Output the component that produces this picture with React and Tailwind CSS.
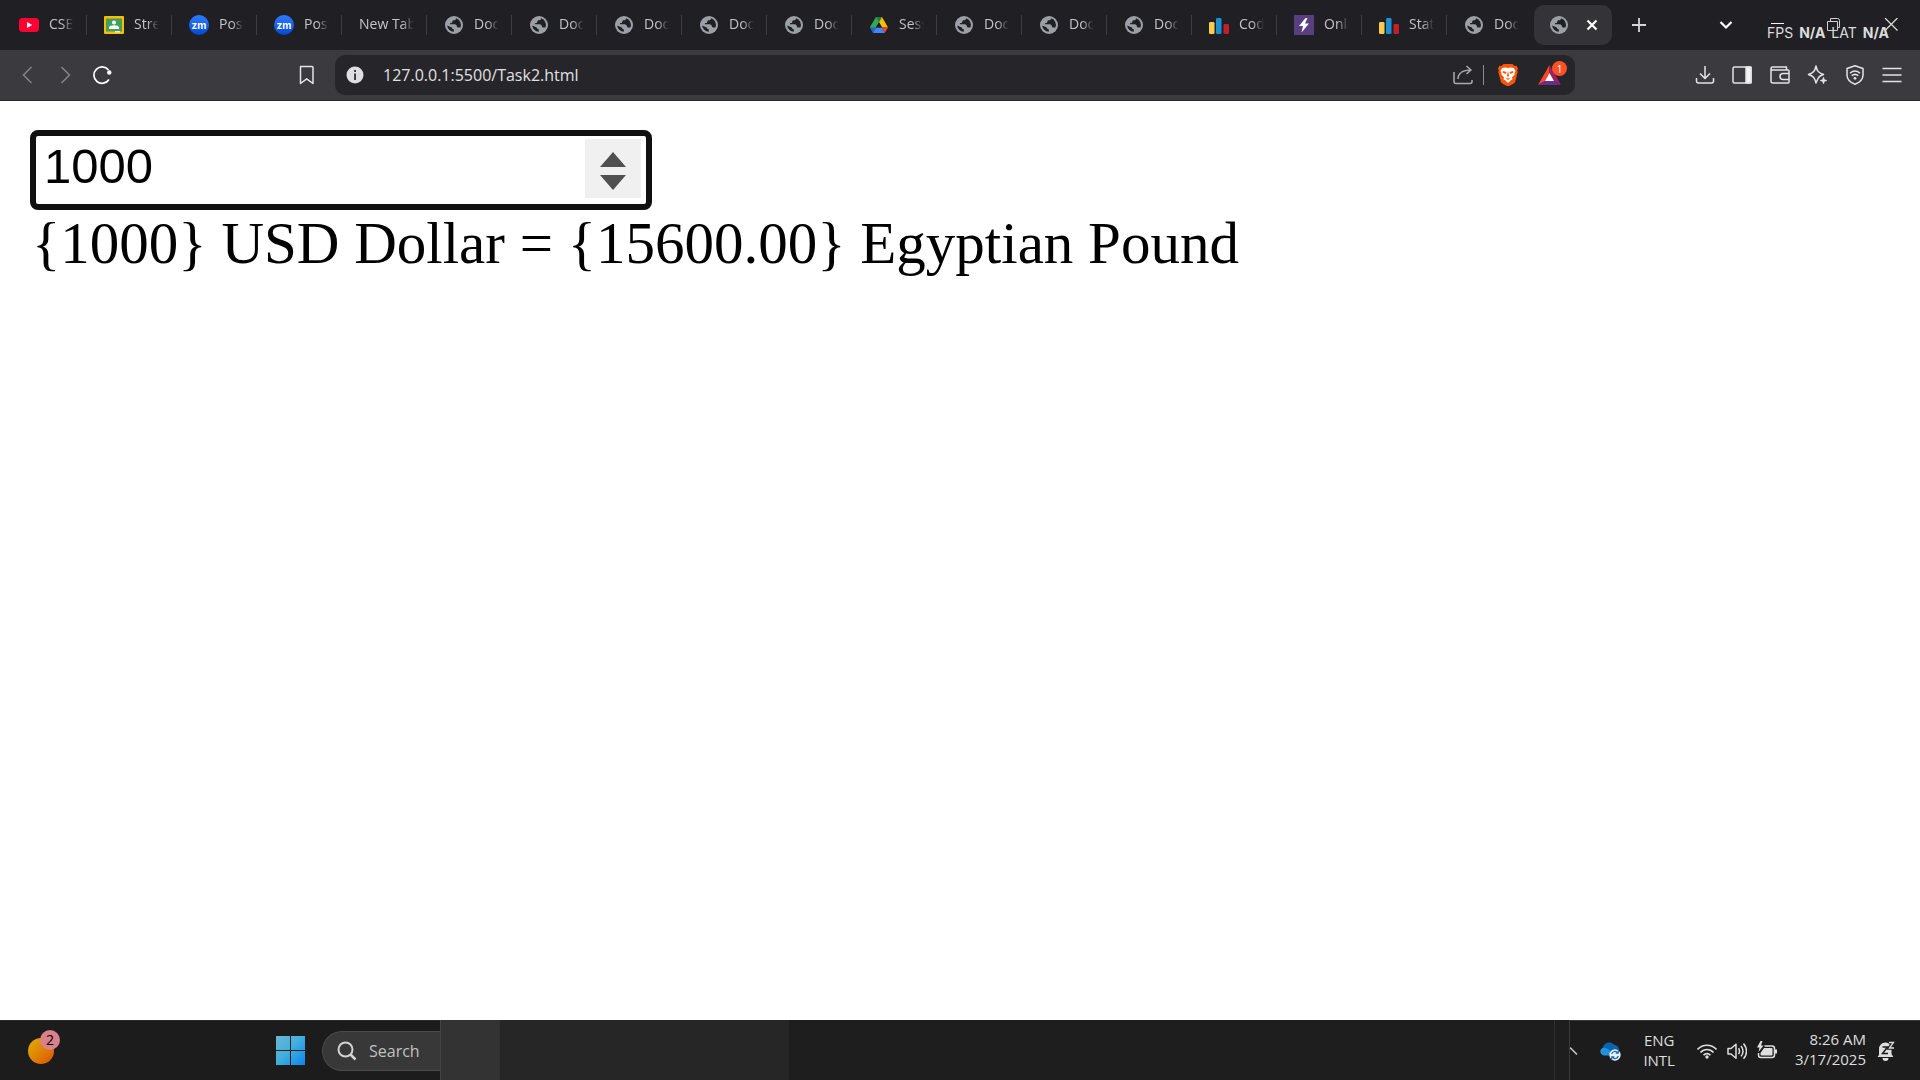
import { useState } from "react";

const doc = { icon: "globe", text: "Doc" };
const TABS = [
  { icon: "youtube", text: "CSE" },
  { icon: "classroom", text: "Stre" },
  { icon: "zoom", text: "Post" },
  { icon: "zoom", text: "Post" },
  { icon: null, text: "New Tab" },
  doc, doc, doc, doc, doc,
  { icon: "drive", text: "Sess" },
  doc, doc, doc,
  { icon: "bars", text: "Cod" },
  { icon: "bolt", text: "Onli" },
  { icon: "bars", text: "Stat" },
  doc,
];

function Globe() {
  return (
    <svg viewBox="0 0 20 20" className="size-5">
      <circle cx="10" cy="10" r="9" fill="#9aa0a6" />
      <path d="M12 3.200C12 4.600 11.200 5.200 10 5.200c-1.300 0-1.700.7-1.700 1.500 0 .9-.5 1.300-1.400 1.300-.7 0-1 .5-1 1.300h4.600c1.600 0 2.400 1 2.400 2.300 0 .5.300.8 1 .8h2.500A7 7 0 0 0 12 3.200zM3.200 10.400l4.600 2.100c.3 1.200.8 1.700 2 1.800v2.500A6.900 6.900 0 0 1 3.200 10.400z" fill="#202024" />
    </svg>
  );
}

function TabIcon({ name }) {
  if (name === "globe") return <Globe />;
  if (name === "youtube")
    return (
      <svg viewBox="0 0 20 20" className="size-5">
        <rect y="3" width="20" height="14" rx="3.500" fill="#ff0033" />
        <path d="M8 7l5.200 3L8 13z" fill="#fff" />
      </svg>
    );
  if (name === "classroom")
    return (
      <svg viewBox="0 0 20 20" className="size-5">
        <rect y="1" width="20" height="18" rx="1" fill="#fbbc04" />
        <rect x="2" y="3.500" width="16" height="13" fill="#43a05c" />
        <circle cx="10" cy="7.500" r="2" fill="#fff" />
        <path d="M5 14v-1.500c0-1.500 2.500-2.300 5-2.300s5 .8 5 2.300V14z" fill="#fff" />
        <path d="M11 16h5v1.500h-5z" fill="#e8eaed" />
      </svg>
    );
  if (name === "zoom")
    return (
      <span className="flex size-5 shrink-0 items-center justify-center rounded-full bg-linear-to-b from-[#2f7bff] to-[#0048d8] font-['Inter'] text-[10px] leading-none font-bold text-white">
        zm
      </span>
    );
  if (name === "drive")
    return (
      <svg viewBox="0 0 20 20" className="size-5">
        <path d="M7 2h6l-3 5.200L4.200 17.200 1 12z" fill="#34a853" />
        <path d="M7 2h6l-3 5.200z" fill="#188038" />
        <path d="M13 2l6 10.500h-6L10 7.200z" fill="#fbbc04" />
        <path d="M7 12.500h6L15.800 18H4z" fill="#4285f4" />
        <path d="M1 12.500h6L4 18z" fill="#1967d2" />
        <path d="M13 12.500h6L15.800 18z" fill="#ea4335" />
        <path d="M10 7.200l3 5.300H7z" fill="#202024" />
      </svg>
    );
  if (name === "bars")
    return (
      <svg viewBox="0 0 20 20" className="size-5">
        <rect x="0" y="7" width="5.500" height="12" rx="1.200" fill="#f9cc4c" />
        <rect x="7" y="3" width="5.500" height="16" rx="1.200" fill="#1b8fd4" />
        <rect x="14.500" y="9" width="5.500" height="10" rx="1.200" fill="#c21f2a" />
      </svg>
    );
  return (
    <svg viewBox="0 0 20 20" className="size-5">
      <rect width="20" height="20" fill="#5a3f80" />
      <path d="M11.500 3L5 11h4l-1.500 6.500L15 8.500h-4L13.500 3z" fill="#fff" />
    </svg>
  );
}

function TabStrip() {
  return (
    <div className="relative flex h-[50px] items-center bg-[#202024] pl-0.5">
      {TABS.map((t, i) => (
        <button
          key={i}
          className={
            "flex h-5 w-[85px] shrink-0 items-center gap-2.5 border-r pr-3 pl-[17px] " +
            (i === TABS.length - 1 ? "border-transparent" : "border-[#3d3d42]")
          }
        >
          {t.icon && <TabIcon name={t.icon} />}
          <span className="min-w-0 flex-1 overflow-hidden mask-r-from-[calc(100%-12px)] pb-0.5 text-left text-[14px] leading-5 whitespace-nowrap text-[#c5c5c9]">
            {t.text}
          </span>
        </button>
      ))}
      <div className="ml-0.5 flex h-10 w-[78px] shrink-0 items-center gap-4 rounded-[10px] bg-[#343438] pl-[15px]">
        <Globe />
        <button aria-label="Close tab">
          <svg viewBox="0 0 14 14" className="size-3.5" stroke="#fff" strokeWidth="2.200">
            <path d="M2.500 2.500l9 9M11.500 2.500l-9 9" />
          </svg>
        </button>
      </div>
      <button aria-label="New tab" className="ml-5">
        <svg viewBox="0 0 14 14" className="size-3.5" stroke="#d5d5d8" strokeWidth="1.800">
          <path d="M7 0v14M0 7h14" />
        </svg>
      </button>
      <div className="ml-auto flex items-center pr-[22px]">
        <button aria-label="Search tabs" className="mr-[38px]">
          <svg viewBox="0 0 14 14" className="size-3.5" fill="none" stroke="#fff" strokeWidth="2.200">
            <path d="M1.500 4L7 9.500 12.500 4" />
          </svg>
        </button>
        <button aria-label="Minimize" className="mr-[42px]">
          <svg viewBox="0 0 14 14" className="size-3.5" fill="none" stroke="#f4f4f4">
            <path d="M0 5.500h13" />
          </svg>
        </button>
        <button aria-label="Restore" className="mr-[43px]">
          <svg viewBox="0 0 14 14" className="size-3.5" fill="none" stroke="#d0d0d0">
            <path d="M.5 3.500h10v9H.5zM3.500 3.500v-3h7a2 2 0 0 1 2 2v7h-2" />
          </svg>
        </button>
        <button aria-label="Close window">
          <svg viewBox="0 0 14 14" className="size-3.5" fill="none" stroke="#e0e0e0" strokeWidth="1.200">
            <path d="M1 0l12.500 12.500M13.500 0L1 12.500" />
          </svg>
        </button>
      </div>
      <div className="pointer-events-none absolute right-[31px] bottom-[7px] flex gap-1.5 font-['Inter'] text-sm leading-5 text-[#dcdcdc]">
        <span>FPS</span>
        <b>N/A</b>
        <span>LAT</span>
        <b>N/A</b>
      </div>
    </div>
  );
}

function Tool({ label, children, w = 1.5 }) {
  return (
    <button aria-label={label} className="shrink-0">
      <svg viewBox="0 0 20 20" className="size-5" fill="none" stroke="#e4e4e7" strokeWidth={w} strokeLinejoin="round">
        {children}
      </svg>
    </button>
  );
}

function Toolbar() {
  return (
    <div className="flex h-[51px] items-center border-b border-[#2a2a2e] bg-[#3b3a3f]">
      <div className="flex w-[335px] shrink-0 items-center pl-[18px]">
        <button aria-label="Back">
          <svg viewBox="0 0 20 20" className="size-5" fill="none" stroke="#85858a" strokeWidth="1.500">
            <path d="M13.500 2L5.500 10l8 8" />
          </svg>
        </button>
        <button aria-label="Forward" className="ml-[18px]">
          <svg viewBox="0 0 20 20" className="size-5" fill="none" stroke="#85858a" strokeWidth="1.500">
            <path d="M5.500 2l8 8-8 8" />
          </svg>
        </button>
        <button aria-label="Reload" className="ml-4">
          <svg viewBox="0 0 20 20" className="size-5" fill="none" stroke="#fff" strokeWidth="1.700">
            <path d="M16.500 5A8.200 8.200 0 1 0 17 14.500" />
            <circle cx="17.300" cy="7.500" r="2.200" fill="#fff" stroke="none" />
          </svg>
        </button>
        <button aria-label="Bookmark" className="mr-[19px] ml-auto">
          <svg viewBox="0 0 20 20" className="size-5" fill="none" stroke="#e4e4e7" strokeWidth="1.500" strokeLinejoin="round">
            <path d="M4.500 1.500H16a1 1 0 0 1 1 1v16l-6.300-4.700-6.200 4.700v-16a1 1 0 0 1 1-1z" />
          </svg>
        </button>
      </div>
      <div className="flex h-10 min-w-0 flex-1 items-center rounded-[10px] bg-[#26262a] pr-2 pl-[11px]">
        <svg viewBox="0 0 18 18" className="size-[18px] shrink-0">
          <circle cx="9" cy="9" r="8.500" fill="#dedee3" />
          <path d="M8.100 4h1.900v2H8.100zM8.100 7.500h1.900V14H8.100z" fill="#38383c" />
        </svg>
        <input
          aria-label="Address"
          defaultValue="127.0.0.1:5500/Task2.html"
          className="ml-[19px] min-w-0 flex-1 bg-transparent text-[16px] leading-6 text-[#e0e0e4] outline-none"
        />
        <Tool label="Share">
          <path d="M1 7v9.500a2 2 0 0 0 2 2h14a2 2 0 0 0 2-2V15M5 14c0-5 4-9 13-9M13.500 1L18 5l-4.500 4" stroke="#a9a9ae" />
        </Tool>
        <span className="mx-2.5 h-5 w-px bg-[#8a8a8f]" />
        <button aria-label="Brave Shields" className="ml-1">
          <svg viewBox="0 0 20 22" className="h-[22px] w-5">
            <path d="M5.500 0h9L16.500 2l2-.3L20 4.500l-.7 2 .4 1.500-2.300 9c-.4 1.500-1 2-2.300 2.900L10 22.500l-5-2.600c-1.300-.9-1.900-1.400-2.300-2.900L.3 8l.5-1.500-.8-2 1.500-2.800 2 .3z" fill="#fb5607" />
            <path d="M10 4l2.700-.5 3 .5 1.800 2.800-1 2.200.3 1.300-3 3.500.8 1.500-1.800 1L10 19l-2.800-2.700-1.800-1 .8-1.500-3-3.500.3-1.300-1-2.200L4.300 4l3-.5z" fill="#fff" />
            <path d="M5 7l3.500 1-.8 2L4.500 8.500zM15 7l-3.500 1 .8 2 3.200-1.500zM10 6.500l1 5.500-1 1-1-1zM7 13.500l3 1 3-1-3 2.500z" fill="#fb5607" />
          </svg>
        </button>
        <button aria-label="Brave Rewards, 1 notification" className="relative ml-5 pr-1.5">
          <svg viewBox="0 0 23 20" className="h-5 w-[23px]">
            <path d="M11.500 0L0 20l7-4 4.500-8z" fill="#ff4724" />
            <path d="M11.500 0L23 20l-7-4-4.500-8z" fill="#9e1f63" />
            <path d="M0 20h23l-7-4H7z" fill="#662d91" />
            <path d="M11.500 8L16 16H7z" fill="#fff" />
          </svg>
          <span className="absolute -top-1 right-0 flex size-[15px] items-center justify-center rounded-full bg-[#ff5226] text-[10px] leading-none text-white">
            1
          </span>
        </button>
      </div>
      <div className="mr-[18px] ml-[120px] flex w-[207px] shrink-0 items-center justify-between">
        <Tool label="Downloads">
          <path d="M10 1v12M5 8.500l5 5 5-5M1.500 13v3a2 2 0 0 0 2 2h13a2 2 0 0 0 2-2v-3" />
        </Tool>
        <Tool label="Sidebar">
          <rect x="1" y="2" width="18" height="16" rx="1.500" />
          <path d="M14 2h5v16h-5z" fill="#f4f4f5" />
        </Tool>
        <Tool label="Wallet">
          <path d="M16.500 5V2H2.500A1.500 1.500 0 0 0 1 3.500V16a2 2 0 0 0 2 2h15a1 1 0 0 0 1-1v-2.500M1 3.500A1.500 1.500 0 0 0 2.500 5H18a1 1 0 0 1 1 1v2.500M19 8.500h-6a3 3 0 0 0 0 6h6z" />
        </Tool>
        <Tool label="Leo AI">
          <path d="M9 1c1 5 2 6.500 7.500 8.500-3 1-4.500 2-5.500 4-.7 1.500-1.300 3-2 4.500-1.200-5.500-3-7-7.500-8.500C6.500 8 8 6 9 1z" />
          <path d="M16.500 12l.9 2.600 2.600.9-2.600.9-.9 2.600-.9-2.600-2.600-.9 2.600-.9z" fill="#e4e4e7" strokeWidth="0.500" />
        </Tool>
        <Tool label="VPN">
          <path d="M10 .8l8 2.700v6.500c0 4.500-3.500 7.500-8 9.300-4.500-1.800-8-4.800-8-9.300V3.500z" />
          <path d="M5 8.200c3-2.600 7-2.600 10 0M6.700 10.700c2-1.600 4.600-1.600 6.600 0" />
          <circle cx="10" cy="13.300" r="1.400" fill="#e4e4e7" stroke="none" />
        </Tool>
        <Tool label="Menu">
          <path d="M.5 3.500h19M.5 10h19M.5 16.500h19" />
        </Tool>
      </div>
    </div>
  );
}

function Converter() {
  const [usd, setUsd] = useState("1000");
  const step = (d) => setUsd(String(Number(usd) + d));
  return (
    <main className="flex-1 bg-white px-[30px] pt-[29px] text-black">
      <div className="flex h-20 w-[622px] rounded-lg border-[6px] border-[#101010] pt-[3px] pr-[5px] pb-1.5 pl-2">
        <input
          type="number"
          aria-label="USD amount"
          value={usd}
          onChange={(e) => setUsd(e.target.value)}
          className="min-w-0 flex-1 [appearance:textfield] pb-1 font-['Liberation_Sans'] text-[49px] leading-[55px] outline-none [&::-webkit-inner-spin-button]:appearance-none"
        />
        <div className="flex w-14 flex-col items-center justify-center gap-2 bg-[#f0f0f0] pt-1">
          <button aria-label="Increase" onClick={() => step(1)}>
            <svg viewBox="0 0 26 15" className="h-[15px] w-[26px]"><path d="M13 0l13 15H0z" fill="#505050" /></svg>
          </button>
          <button aria-label="Decrease" onClick={() => step(-1)}>
            <svg viewBox="0 0 26 15" className="h-[15px] w-[26px]"><path d="M0 0h26L13 15z" fill="#505050" /></svg>
          </button>
        </div>
      </div>
      <p className="pl-0.5 font-['Liberation_Serif'] text-[59px] leading-[66px]">
        {`{${usd}} USD Dollar = {${(Number(usd) * 15.6).toFixed(2)}} Egyptian Pound`}
      </p>
    </main>
  );
}

function Taskbar() {
  return (
    <footer className="flex h-[60px] bg-[#1e1e1e] text-[#dedede]">
      <div className="flex w-[440px] shrink-0 items-center border-t border-[#2b2b2b] bg-[#1c1c1c]">
        <button aria-label="Widgets, 2 updates" className="relative ml-7 size-[26px] rounded-full bg-linear-to-br from-[#dcb000] to-[#dc4e00]">
          <span className="absolute -top-2 -right-1.5 flex size-5 items-center justify-center rounded-full bg-[#d9808a] text-[14px] leading-none text-black">
            2
          </span>
        </button>
        <button aria-label="Start" className="ml-[222px]">
          <svg viewBox="0 0 29 29" className="size-[29px]">
            <defs>
              <linearGradient id="win" x1="0" y1="0" x2="29" y2="29" gradientUnits="userSpaceOnUse">
                <stop stopColor="#6cb7d2" />
                <stop offset=".45" stopColor="#43b0dc" />
                <stop offset="1" stopColor="#0a86ee" />
              </linearGradient>
            </defs>
            <path d="M0 0h14v14H0zM15 0h14v14H15zM0 15h14v14H0zM15 15h14v14H15z" fill="url(#win)" />
          </svg>
        </button>
        <button className="ml-[17px] flex h-10 flex-1 items-center rounded-l-full border border-r-0 border-[#4a4a4a] bg-[#383838] pl-3.5 text-[16px] text-[#c0c0c0]">
          <svg viewBox="0 0 20 20" className="mr-3 size-5" fill="none" stroke="#d2d2d2" strokeWidth="2">
            <circle cx="8.500" cy="8.500" r="7" />
            <path d="M13.500 13.500L18.500 18.500" strokeWidth="2.500" />
          </svg>
          Search
        </button>
      </div>
      <div className="w-[60px] border-l border-[#444] bg-[#333]" />
      <div className="w-[289px] bg-[#262626]" />
      <div className="flex-1 border-r border-[#303030]" />
      <div className="w-3.5" />
      <div className="flex shrink-0 items-center border-t border-l border-[#3a3a3a] bg-[#1c1c1c] pr-[25px]">
        <button aria-label="Show hidden icons">
          <svg viewBox="0 0 8 8" className="size-2" fill="none" stroke="#c8c8c8" strokeWidth="1.500">
            <path d="M0 .5L7 7.500" />
          </svg>
        </button>
        <button aria-label="OneDrive" className="ml-[22px]">
          <svg viewBox="0 0 21 20" className="h-5 w-[21px]">
            <path d="M3.500 14A4 4 0 0 1 3 6.500 6.500 6.500 0 0 1 14.500 4 5 5 0 0 1 19 9v5z" fill="#0a64ad" />
            <path d="M3.500 14.500a4 4 0 0 1-1-7.500c2-.8 4 0 6 1.500l6 6z" fill="#2590dc" />
            <circle cx="15" cy="14" r="5.700" fill="#e8f0f8" />
            <path d="M11.700 13a3.400 3.400 0 0 1 6-1.200M18.300 15a3.400 3.400 0 0 1-6 1.200M18.300 9.500v2.700h-2.600M11.700 18.500v-2.700h2.600" fill="none" stroke="#1769b5" strokeWidth="1.200" />
          </svg>
        </button>
        <button className="ml-[22px] pb-0.5 text-center text-[15px] leading-5">
          ENG
          <br />
          INTL
        </button>
        <button aria-label="Network, volume and battery" className="ml-[22px] flex items-center gap-2.5">
          <svg viewBox="0 0 20 20" className="size-5" fill="none" stroke="#dedede" strokeWidth="1.600">
            <path d="M.5 8.500c5.300-5.700 13.700-5.700 19 0M3.500 11.500c3.700-4 9.300-4 13 0M6.500 14.300c2-2.200 5-2.200 7 0" />
            <circle cx="10" cy="16" r="1.700" fill="#dedede" stroke="none" />
          </svg>
          <svg viewBox="0 0 20 20" className="size-5" fill="none" stroke="#dedede" strokeWidth="1.500" strokeLinejoin="round">
            <path d="M1 7.500h3L9 3.200v14L4 13H1zM11.500 7.300c1.300 1.800 1.300 4 0 5.800M14 5c2.500 3.200 2.500 7.200 0 10.400M16.500 2.500c3.800 4.800 3.800 10.500 0 15.300" />
          </svg>
          <svg viewBox="0 0 20 20" className="size-5" fill="none" stroke="#dedede" strokeWidth="1.500">
            <path d="M7.500 5H15a2.500 2.500 0 0 1 2.500 2.500V14a2.500 2.500 0 0 1-2.500 2.500H4A2.500 2.500 0 0 1 1.500 14v-2" />
            <path d="M7 7h7.500a1 1 0 0 1 1 1v5.500a1 1 0 0 1-1 1h-10a1 1 0 0 1-1-1V12zM18 8.500h2v4h-2zM3.500 0L0 6.500h2.500L1.500 11 6.500 4.500H4L5.500 0z" fill="#dedede" stroke="none" />
          </svg>
        </button>
        <button className="ml-[18px] pb-1 text-right text-[15px] leading-5">
          8:26 AM
          <br />
          3/17/2025
        </button>
        <button aria-label="Notifications snoozed" className="ml-[11px]">
          <svg viewBox="0 0 18 20" className="h-5 w-[18px]">
            <path d="M2 14V8.500A6.500 6.500 0 0 1 8.500 1.500c3.500 0 6 3 6 7V13l1.800 3H.5zM5.500 17h6a3 3 0 0 1-6 0z" fill="#dedede" />
            <path d="M5.500 6h5l-5 6.500h5.500" fill="none" stroke="#1c1c1c" strokeWidth="1.500" />
            <path d="M12 1.500h4.500L12.500 7H17" fill="none" stroke="#1c1c1c" strokeWidth="3.500" />
            <path d="M12 1.500h4.500L12.500 7H17" fill="none" stroke="#dedede" strokeWidth="1.300" />
          </svg>
        </button>
      </div>
    </footer>
  );
}

export default function App() {
  return (
    <div className="flex min-h-screen flex-col overflow-hidden font-['Open_Sans','Noto_Sans',sans-serif]">
      <header>
        <TabStrip />
        <Toolbar />
      </header>
      <Converter />
      <Taskbar />
    </div>
  );
}
